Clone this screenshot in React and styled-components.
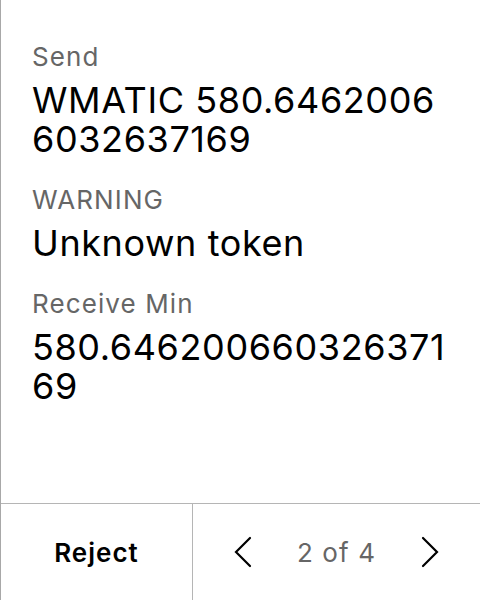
import React from 'react';
import styled, { createGlobalStyle } from 'styled-components';

const GlobalStyle = createGlobalStyle`
  html, body {
    margin: 0;
    padding: 0;
    background: #ffffff;
  }
  body {
    font-family: Inter, "Noto Sans", sans-serif;
    color: #000000;
  }
`;

const Screen = styled.div`
  width: 480px;
  height: 600px;
  box-sizing: border-box;
  border-left: 1px solid #a8a8a8;
  display: flex;
  flex-direction: column;
  overflow: hidden;
`;

const Content = styled.div`
  flex: 1;
  padding: 41px 32px 0 31px;
  display: flex;
  flex-direction: column;
  gap: 25px;
`;

const Field = styled.div`
  display: flex;
  flex-direction: column;
  gap: 8px;
`;

const Label = styled.div`
  font-size: 26px;
  line-height: 32px;
  letter-spacing: 1.1px;
  color: #666666;
`;

const Value = styled.div`
  font-size: 36px;
  line-height: 39px;
  letter-spacing: 0.6px;
  color: #000000;
  word-break: break-all;
`;

const Footer = styled.div`
  height: 96px;
  flex-shrink: 0;
  border-top: 1px solid #b5b5b5;
  display: flex;
`;

const RejectButton = styled.button`
  width: 192px;
  border: none;
  border-right: 1px solid #b5b5b5;
  background: transparent;
  font-family: inherit;
  font-size: 26px;
  font-weight: 600;
  letter-spacing: 1px;
  color: #000000;
  padding: 0;
  cursor: pointer;
`;

const Pager = styled.div`
  flex: 1;
  display: flex;
  align-items: center;
`;

const NavButton = styled.button`
  width: 100px;
  height: 100%;
  border: none;
  background: transparent;
  padding: 0;
  display: flex;
  align-items: center;
  justify-content: center;
  cursor: pointer;
`;

const PageLabel = styled.div`
  flex: 1;
  text-align: center;
  font-size: 26px;
  letter-spacing: 1.1px;
  color: #666666;
`;

const Chevron = ({ dir }) => (
  <svg width="18" height="32" viewBox="0 0 18 32" fill="none">
    <polyline
      points={dir === 'left' ? '16,2 2,16 16,30' : '2,2 16,16 2,30'}
      stroke="#000"
      strokeWidth="2.2"
      strokeLinecap="round"
      strokeLinejoin="miter"
    />
  </svg>
);

const fields = [
  { label: 'Send', value: 'WMATIC 580.6462006 6032637169' },
  { label: 'WARNING', value: 'Unknown token' },
  { label: 'Receive Min', value: '580.64620066032637169' },
];

export default function App() {
  return (
    <>
      <GlobalStyle />
      <Screen>
        <Content>
          {fields.map((f) => (
            <Field key={f.label}>
              <Label>{f.label}</Label>
              <Value>{f.value}</Value>
            </Field>
          ))}
        </Content>
        <Footer>
          <RejectButton>Reject</RejectButton>
          <Pager>
            <NavButton aria-label="Previous">
              <Chevron dir="left" />
            </NavButton>
            <PageLabel>2 of 4</PageLabel>
            <NavButton aria-label="Next">
              <Chevron dir="right" />
            </NavButton>
          </Pager>
        </Footer>
      </Screen>
    </>
  );
}
